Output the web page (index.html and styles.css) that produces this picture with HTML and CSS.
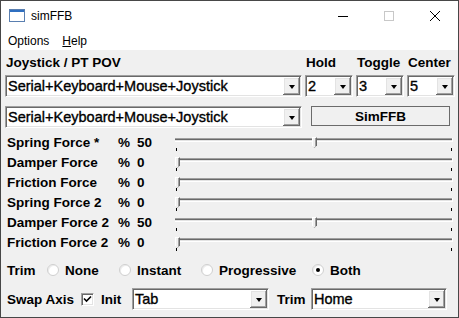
FILE: index.html
```html
<!DOCTYPE html>
<html>
<head>
<meta charset="utf-8">
<title>simFFB</title>
<link rel="stylesheet" href="styles.css">
</head>
<body>
<div class="win">
  <div class="titlebar">
    <svg class="appicon" width="16" height="14" viewBox="0 0 16 14">
      <rect x="0.5" y="0.5" width="15" height="12" fill="#fff" stroke="#5a7fb0"/>
      <rect x="1" y="1" width="14" height="2" fill="#2f6fc0"/>
    </svg>
    <span class="title">simFFB</span>
    <div class="caps">
      <div class="cap"><svg width="10" height="10" viewBox="0 0 10 10"><line x1="0" y1="5.5" x2="10" y2="5.5" stroke="#000" stroke-width="1"/></svg></div>
      <div class="cap"><svg width="10" height="10" viewBox="0 0 10 10"><rect x="0.5" y="0.5" width="9" height="9" fill="none" stroke="#c8c8c8"/></svg></div>
      <div class="cap"><svg width="10" height="10" viewBox="0 0 10 10"><path d="M0 0 L10 10 M10 0 L0 10" stroke="#000" stroke-width="1"/></svg></div>
    </div>
  </div>
  <div class="menubar">
    <span class="menu">Options</span>
    <span class="menu"><u>H</u>elp</span>
  </div>
  <div class="client">
    <div class="topgrid">
      <div class="lbl">Joystick / PT POV</div>
      <div class="lbl hdr">Hold</div>
      <div class="lbl hdr">Toggle</div>
      <div class="lbl hdr">Center</div>
      <div class="combo"><span class="ctext">Serial+Keyboard+Mouse+Joystick</span><span class="cbtn"><i class="arr"></i></span></div>
      <div class="combo"><span class="ctext">2</span><span class="cbtn"><i class="arr"></i></span></div>
      <div class="combo"><span class="ctext">3</span><span class="cbtn"><i class="arr"></i></span></div>
      <div class="combo"><span class="ctext">5</span><span class="cbtn"><i class="arr"></i></span></div>
    </div>
    <div class="row2">
      <div class="combo wide"><span class="ctext">Serial+Keyboard+Mouse+Joystick</span><span class="cbtn"><i class="arr"></i></span></div>
      <div class="btn">SimFFB</div>
    </div>
    <div class="sliders">
      <div class="srow"><span class="lbl">Spring Force *</span><span class="lbl">%</span><span class="lbl">50</span>
        <div class="slider"><div class="track"></div><div class="thumb" style="left:137px"></div><i class="tick tl"></i><i class="tick tr"></i></div></div>
      <div class="srow"><span class="lbl">Damper Force</span><span class="lbl">%</span><span class="lbl">0</span>
        <div class="slider"><div class="track"></div><div class="thumb" style="left:0px"></div><i class="tick tl"></i><i class="tick tr"></i></div></div>
      <div class="srow"><span class="lbl">Friction Force</span><span class="lbl">%</span><span class="lbl">0</span>
        <div class="slider"><div class="track"></div><div class="thumb" style="left:0px"></div><i class="tick tl"></i><i class="tick tr"></i></div></div>
      <div class="srow"><span class="lbl">Spring Force 2</span><span class="lbl">%</span><span class="lbl">0</span>
        <div class="slider"><div class="track"></div><div class="thumb" style="left:0px"></div><i class="tick tl"></i><i class="tick tr"></i></div></div>
      <div class="srow"><span class="lbl">Damper Force 2</span><span class="lbl">%</span><span class="lbl">50</span>
        <div class="slider"><div class="track"></div><div class="thumb" style="left:137px"></div><i class="tick tl"></i><i class="tick tr"></i></div></div>
      <div class="srow"><span class="lbl">Friction Force 2</span><span class="lbl">%</span><span class="lbl">0</span>
        <div class="slider"><div class="track"></div><div class="thumb" style="left:0px"></div><i class="tick tl"></i><i class="tick tr"></i></div></div>
    </div>
    <div class="trimrow">
      <span class="lbl">Trim</span>
      <span class="opt"><i class="radio"></i><span class="lbl">None</span></span>
      <span class="opt"><i class="radio"></i><span class="lbl">Instant</span></span>
      <span class="opt"><i class="radio"></i><span class="lbl">Progressive</span></span>
      <span class="opt"><i class="radio on"></i><span class="lbl">Both</span></span>
    </div>
    <div class="swaprow">
      <span class="lbl">Swap Axis</span>
      <span class="check"><svg width="9" height="9" viewBox="0 0 9 9"><path d="M1 3.5 L3.5 6 L8 1.5" fill="none" stroke="#000" stroke-width="1.6"/></svg></span>
      <span class="lbl">Init</span>
      <div class="combo"><span class="ctext">Tab</span><span class="cbtn"><i class="arr"></i></span></div>
      <span class="lbl trim2">Trim</span>
      <div class="combo"><span class="ctext">Home</span><span class="cbtn"><i class="arr"></i></span></div>
    </div>
  </div>
</div>
</body>
</html>
```
FILE: styles.css
```css
html, body { margin: 0; padding: 0; background: #f0f0f0; }
.win {
  width: 459px; height: 318px; box-sizing: border-box;
  border: 1px solid #474747;
  display: flex; flex-direction: column;
  font-family: "Liberation Sans", Arial, sans-serif;
  overflow: hidden;
}
.titlebar {
  height: 29px; background: #fff; display: flex; align-items: center;
  flex: none;
}
.appicon { margin-left: 8px; margin-top: 1px; }
.title { margin-left: 6px; font-size: 12px; color: #000; }
.caps { margin-left: auto; display: flex; height: 29px; }
.cap { width: 46px; height: 29px; display: flex; align-items: center; justify-content: center; }
.menubar {
  height: 19px; background: #fff; display: flex; align-items: center; flex: none;
  font-size: 12px; padding-left: 7px; padding-top: 1px; gap: 13px;
}
.menu { color: #000; }
.client {
  flex: 1; background: #f0f0f0; padding-left: 4px;
  display: flex; flex-direction: column;
}
.lbl { font-weight: bold; font-size: 13.5px; color: #000; white-space: nowrap; }
.topgrid {
  display: grid; grid-template-columns: 297px 48px 48px 48px;
  grid-template-rows: 25px 22px; column-gap: 3px;
}
.topgrid > .lbl { align-self: center; padding-left: 1px; padding-bottom: 1px; }
.combo {
  box-sizing: border-box; height: 22px; background: #fff;
  border: 1px solid; border-color: #a0a0a0 #fff #fff #a0a0a0;
  box-shadow: inset 1px 1px #696969, inset -1px -1px #e3e3e3;
  display: flex; align-items: stretch; padding: 1px;
}
.ctext {
  flex: 1; font-size: 14.5px; line-height: 18px; padding-left: 1px; color: #000;
  white-space: nowrap; overflow: hidden; -webkit-text-stroke: 0.35px #000;
}
.cbtn {
  width: 17px; background: #f0f0f0; flex: none;
  box-shadow: inset -1px -1px #696969, inset 1px 1px #fff, inset -2px -2px #a0a0a0, inset 2px 2px #e3e3e3;
  display: flex; align-items: center; justify-content: center;
}
.arr {
  width: 0; height: 0; border-left: 3.5px solid transparent; border-right: 3.5px solid transparent;
  border-top: 4px solid #000; margin-top: 1px;
}
.row2 { display: flex; margin-top: 9px; align-items: flex-start; }
.combo.wide { width: 297px; }
.btn {
  box-sizing: border-box; width: 139px; height: 20px; margin-left: 9px;
  border: 1px solid #6b6b6b; background: #f0f0f0;
  display: flex; align-items: center; justify-content: center;
  font-weight: bold; font-size: 13.5px;
}
.sliders { margin-top: 5px; display: flex; flex-direction: column; }
.srow {
  display: grid; grid-template-columns: 111px 19px 38px 278px;
  height: 20px; align-items: center; margin-left: 2px;
}
.srow > .lbl { padding-bottom: 2px; }
.slider { position: relative; height: 20px; }
.track {
  position: absolute; left: 0; right: 0; top: 5px; height: 4px;
  background: linear-gradient(#a0a0a0 0 1px, #696969 1px 2px, #e3e3e3 2px 3px, #fff 3px 4px);
  border-right: 1px solid #fff;
}
.thumb {
  position: absolute; top: 4px; width: 5px; height: 11px; box-sizing: border-box;
  background: #f0f0f0;
  border-left: 1px solid #fff; border-top: 1px solid #fff;
  border-right: 1px solid #696969;
  clip-path: polygon(0 0, 100% 0, 100% 75%, 50% 100%, 0 75%);
  box-shadow: inset -1px -1px #a0a0a0;
}
.tick { position: absolute; width: 1px; height: 3px; top: 15px; background: #000; }
.tl { left: 1px; }
.tr { left: 276px; }
.trimrow {
  display: grid; grid-template-columns: 40px 72px 82px 111px auto;
  height: 35px; align-items: center; margin-left: 2px; padding-bottom: 1px; box-sizing: border-box;
}
.opt { display: flex; align-items: center; gap: 6px; }
.radio {
  width: 12px; height: 12px; box-sizing: border-box; border-radius: 50%;
  background: #fff; border: 1px solid #cfcfcf; display: flex; align-items: center; justify-content: center;
  box-shadow: inset 1px 1px #ececec;
}
.radio.on::after { content: ""; width: 4px; height: 4px; border-radius: 50%; background: #000; }
.swaprow {
  display: grid; grid-template-columns: 74px 20px 31px 137px 42px 136px;
  height: 22px; align-items: center; margin-left: 2px;
}
.check {
  width: 13px; height: 13px; box-sizing: border-box; background: #fff;
  border: 1px solid; border-color: #a0a0a0 #fff #fff #a0a0a0;
  box-shadow: inset 1px 1px #696969, inset -1px -1px #e3e3e3;
  display: flex; align-items: center; justify-content: center;
}
.trim2 { padding-left: 8px; }
```
